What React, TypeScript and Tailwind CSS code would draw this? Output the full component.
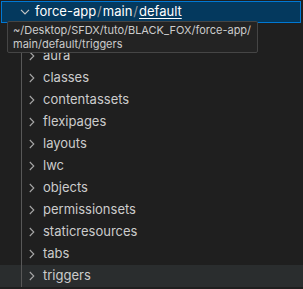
import React from 'react';

const folders = [
  'applications',
  'aura',
  'classes',
  'contentassets',
  'flexipages',
  'layouts',
  'lwc',
  'objects',
  'permissionsets',
  'staticresources',
  'tabs',
  'triggers',
];

function Chevron({ down }: { down?: boolean }) {
  if (down) {
    return (
      <svg width="10" height="6" viewBox="0 0 10 6" className="shrink-0">
        <path d="M1 0.8 L5 4.8 L9 0.8" fill="none" stroke="#c5c5c5" strokeWidth="1.2" />
      </svg>
    );
  }
  return (
    <svg width="6" height="10" viewBox="0 0 6 10" className="shrink-0">
      <path d="M0.8 1 L4.8 5 L0.8 9" fill="none" stroke="#a8a8a8" strokeWidth="1.1" />
    </svg>
  );
}

export default function App() {
  return (
    <div
      className="relative w-[303px] h-[289px] overflow-hidden bg-[#1f1f1f] pt-px text-[13px]"
      style={{ fontFamily: 'Inter, "Noto Sans", sans-serif' }}
    >
      <div className="ml-px w-[300px] h-[22px] flex items-center bg-[#04395e] border border-[#0078d4]">
        <div className="w-[18px]" />
        <Chevron down />
        <div className="ml-[5px] flex items-center text-white">
          <span>force-app</span>
          <span className="px-[1px] text-[#9a9a9a]">/</span>
          <span>main</span>
          <span className="px-[1px] text-[#9a9a9a]">/</span>
          <span className="underline underline-offset-2">default</span>
        </div>
      </div>

      {folders.map((name) => (
        <div
          key={name}
          className={`h-[22px] flex items-center ${name === 'triggers' ? 'bg-[#2a2d2e]' : ''}`}
        >
          <div className="w-[21px] shrink-0" />
          <div className="w-px h-full bg-[#585858] shrink-0" />
          <div className="w-[7px] shrink-0" />
          <Chevron />
          <span className="ml-[8px] text-[#cccccc]">{name}</span>
        </div>
      ))}

      <div className="absolute left-[7px] top-[21px] w-[251px] h-[32px] bg-[#232323] border border-[#454545] rounded-[2px] px-[5px] pt-[1px] text-[11px] text-[#cccccc] leading-[14px] whitespace-nowrap">
        <div>~/Desktop/SFDX/tuto/BLACK_FOX/force-app/</div>
        <div>main/default/triggers</div>
      </div>
    </div>
  );
}
